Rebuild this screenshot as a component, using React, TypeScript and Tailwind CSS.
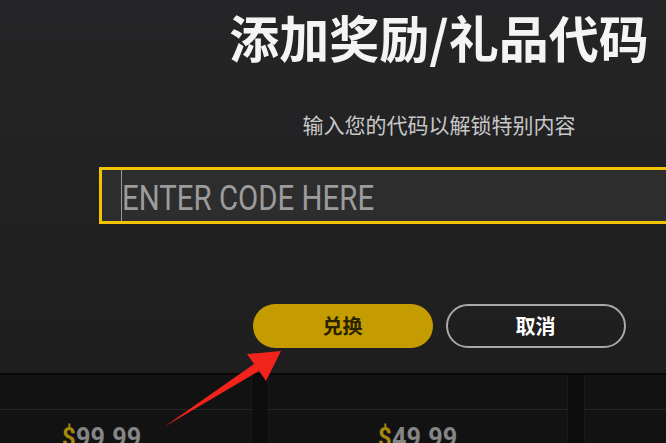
import React from "react";

const prices = ["99.99", "49.99", "19.99"];

function PriceCard({ price }: { price: string }) {
  return (
    <div className="w-[300px] shrink-0 bg-[#121212] h-full border-x border-[#191919]">
      <div className="h-[34px]" />
      <div className="border-t border-[#272727] pl-[109px] pt-[14px] flex items-start font-['Roboto',sans-serif] font-bold text-[28px] leading-none">
        <span className="inline-block origin-left scale-x-[0.85] text-[#a8880f]">$</span>
        <span className="inline-block origin-left scale-x-[0.9] text-[#858585] -ml-[2px]">{price}</span>
      </div>
    </div>
  );
}

export default function App() {
  return (
    <div className="relative w-[666px] h-[443px] overflow-hidden bg-[#0d0d0d] font-['Noto_Sans_CJK_SC',sans-serif]">
      {/* redeem dialog */}
      <div className="w-[878px] h-[375px] flex flex-col items-center bg-gradient-to-b from-[#252527] to-[#1e1e1f] border-b-2 border-[#080808]">
        <h1 className="mt-[11px] text-[50px] leading-[50px] font-bold text-[#f4f4f4]">
          添加奖励/礼品代码
        </h1>
        <p className="mt-[53px] text-[21px] leading-[21px] text-[#c8c8c8]">
          输入您的代码以解锁特别内容
        </p>
        <div className="mt-[32px] w-[680px] h-[57px] border-[3px] border-[#f3c300] bg-[#2d2d2e] flex items-stretch pl-[19px]">
          <div className="w-px bg-[#9a9a9a]" />
          <div className="pt-[11px]">
            <span className="inline-block origin-left scale-x-[0.84] font-['Roboto',sans-serif] text-[35px] leading-none text-[#9c9c9c] whitespace-nowrap">
              ENTER CODE HERE
            </span>
          </div>
        </div>
        <div className="mt-[80px] flex gap-[13px]">
          <button className="w-[180px] h-[44px] rounded-full bg-[#c49c00] text-[20px] font-bold text-[#2a2300]">
            兑换
          </button>
          <button className="w-[180px] h-[44px] rounded-full border-2 border-[#a8a8a8] text-[20px] font-bold text-white">
            取消
          </button>
        </div>
      </div>

      {/* store cards behind the dialog */}
      <div className="h-[68px] flex gap-[16px] -ml-[48px]">
        {prices.map((p) => (
          <PriceCard key={p} price={p} />
        ))}
      </div>

      {/* red pointer arrow */}
      <svg
        className="absolute left-0 top-0 pointer-events-none"
        width="666"
        height="443"
        viewBox="0 0 666 443"
      >
        <polygon
          points="164,427 254,364 247,354 281,351 266,381 259,371"
          fill="#f2231a"
        />
      </svg>
    </div>
  );
}
